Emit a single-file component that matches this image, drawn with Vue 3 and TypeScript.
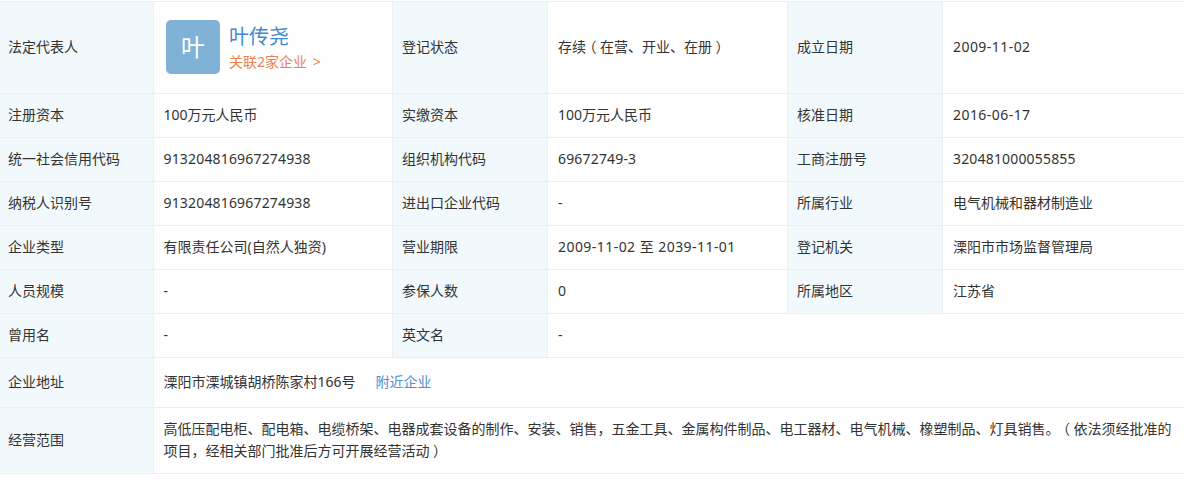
<script setup lang="ts">
interface Cell { label: string; value: string }
const rows: Cell[][] = [
  [{ label: '注册资本', value: '100万元人民币' }, { label: '实缴资本', value: '100万元人民币' }, { label: '核准日期', value: '2016-06-17' }],
  [{ label: '统一社会信用代码', value: '913204816967274938' }, { label: '组织机构代码', value: '69672749-3' }, { label: '工商注册号', value: '320481000055855' }],
  [{ label: '纳税人识别号', value: '913204816967274938' }, { label: '进出口企业代码', value: '-' }, { label: '所属行业', value: '电气机械和器材制造业' }],
  [{ label: '企业类型', value: '有限责任公司(自然人独资)' }, { label: '营业期限', value: '2009-11-02 至 2039-11-01' }, { label: '登记机关', value: '溧阳市市场监督管理局' }],
  [{ label: '人员规模', value: '-' }, { label: '参保人数', value: '0' }, { label: '所属地区', value: '江苏省' }],
]
const isDate = (v: string): boolean => /^\d{4}-\d\d-/.test(v)
const isCode = (v: string): boolean => /^[\d-]{2,}$/.test(v) && !isDate(v)
</script>

<template>
  <div class="page">
    <table class="info">
      <colgroup>
        <col class="c1" /><col class="c2" /><col class="c3" /><col class="c4" /><col class="c5" /><col class="c6" />
      </colgroup>
      <tbody>
        <tr class="r-top">
          <th>法定代表人</th>
          <td>
            <div class="boss">
              <div class="avatar">叶</div>
              <div class="boss-text">
                <a class="boss-name">叶传尧</a>
                <a class="boss-link">关联2家企业 <span class="gt">&gt;</span></a>
              </div>
            </div>
          </td>
          <th>登记状态</th>
          <td>存续<span class="paren">（</span>在营、开业、在册<span class="paren">）</span></td>
          <th>成立日期</th>
          <td class="date">2009-11-02</td>
        </tr>
        <tr v-for="(row, i) in rows" :key="i" class="r-std">
          <template v-for="cell in row" :key="cell.label">
            <th>{{ cell.label }}</th>
            <td :class="{ num: isCode(cell.value), date: isDate(cell.value) }">{{ cell.value }}</td>
          </template>
        </tr>
        <tr class="r-std">
          <th>曾用名</th>
          <td>-</td>
          <th>英文名</th>
          <td colspan="3">-</td>
        </tr>
        <tr class="r-addr">
          <th>企业地址</th>
          <td colspan="5">溧阳市溧城镇胡桥陈家村166号<a class="near">附近企业</a></td>
        </tr>
        <tr class="r-scope">
          <th>经营范围</th>
          <td colspan="5">
            <div>高低压配电柜、配电箱、电缆桥架、电器成套设备的制作、安装、销售，五金工具、金属构件制品、电工器材、电气机械、橡塑制品、灯具销售。<span class="paren">（</span>依法须经批准的</div>
            <div>项目，经相关部门批准后方可开展经营活动<span class="paren">）</span></div>
          </td>
        </tr>
      </tbody>
    </table>
  </div>
</template>

<style>
html, body { margin: 0; background: #fff; }
</style>

<style scoped>
.page {
  width: 1184px;
  height: 480px;
  overflow: hidden;
  padding-top: 1px;
  box-sizing: border-box;
  font-family: "Noto Sans", "Noto Sans CJK SC", sans-serif;
  text-spacing-trim: space-all;
}
.info {
  table-layout: fixed;
  border-collapse: collapse;
  font-size: 14px;
  color: #333;
  margin-left: -1px;
  width: 1185px;
}
.c1 { width: 154px; }
.c2 { width: 239px; }
.c3 { width: 155px; }
.c4 { width: 240px; }
.c5 { width: 155px; }
.c6 { width: 242px; }
th, td {
  border: 1px solid #e9eff3;
  padding: 0 10px 2px;
  box-sizing: border-box;
  text-align: left;
  font-weight: 400;
  line-height: 22px;
  white-space: nowrap;
}
th { background: #f2f9fc; padding-left: 9px; }
th:first-child { padding-left: 8px; }
td:nth-child(2) { padding-left: 9.5px; }
.r-top { height: 92px; }
.r-std { height: 44px; }
.r-addr { height: 50px; }
.r-scope { height: 66px; }
.num { letter-spacing: 0.17px; }
.date { letter-spacing: 0.45px; }
.boss { display: flex; align-items: center; gap: 9px; padding-left: 2.5px; }
.avatar {
  width: 54px;
  height: 54px;
  border-radius: 5px;
  background: #7fb2d6;
  color: #fff;
  font-size: 24px;
  line-height: 54px;
  text-align: center;
}
.boss-text { display: flex; flex-direction: column; padding-top: 2px; }
.boss-name { color: #3f8ad0; font-size: 20px; line-height: 28px; }
.boss-link { color: #ee7f4e; line-height: 22px; }
.gt { margin-left: 2px; }
.near { color: #4b8fd6; margin-left: 20px; }
.paren { display: inline-block; width: 1em; text-align: center; font-feature-settings: "halt"; }
</style>
